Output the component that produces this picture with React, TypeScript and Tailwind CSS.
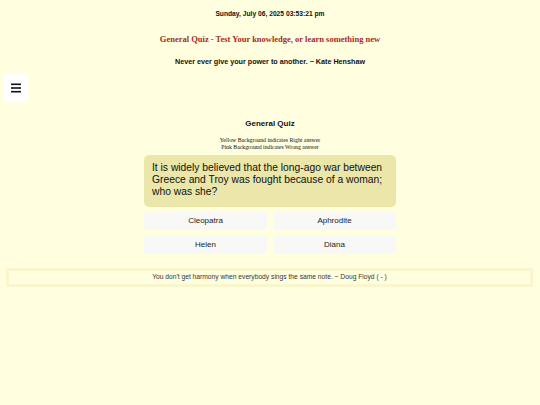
const answers = ['Cleopatra', 'Aphrodite', 'Helen', 'Diana'];

const App = () => {
  return (
    <div className="min-h-[405px] bg-[#ffffe0] font-['Liberation_Sans',Arial,sans-serif] text-[#111]">
      {/* header */}
      <div className="flex flex-col items-center pt-[10px]">
        <div className="text-[6.7px] leading-[8px] font-bold">Sunday, July 06, 2025 03:53:21 pm</div>
        <div className="mt-[16px] text-[8.5px] leading-[10px] font-bold text-[#a52a2a] font-['Liberation_Serif','Times_New_Roman',serif]">
          General Quiz - Test Your knowledge, or learn something new
        </div>
        <div className="mt-[14px] text-[7.2px] leading-[8px] font-bold">Never ever give your power to another. ~ Kate Henshaw</div>
      </div>

      {/* menu button */}
      <div className="mt-[8px] ml-[4px] w-[24px] h-[28px] bg-white flex items-center justify-center">
        <svg width="10" height="10" viewBox="0 0 10 10">
          <rect x="0" y="0.5" width="10" height="1.6" fill="#111" />
          <rect x="0" y="4.2" width="10" height="1.6" fill="#111" />
          <rect x="0" y="7.9" width="10" height="1.6" fill="#111" />
        </svg>
      </div>

      {/* quiz */}
      <div className="mt-[17px] mx-auto w-[252px] flex flex-col items-center">
        <div className="text-[8px] leading-[10px] font-bold">General Quiz</div>
        <div className="mt-[8px] text-[5.8px] leading-[7px] text-center font-['Liberation_Serif','Times_New_Roman',serif]">
          <div>Yellow Background indicates Right answer</div>
          <div>Pink Background indicates Wrong answer</div>
        </div>
        <div className="mt-[4px] w-full h-[52px] bg-[#ebe6a9] rounded-[5px] px-[8px] pt-[7px] text-[10.3px] leading-[12px] text-[#111]">
          It is widely believed that the long-ago war between Greece and Troy was fought because of a woman; who was she?
        </div>
        <div className="mt-[4px] w-full grid grid-cols-2 gap-x-[6px] gap-y-[5px]">
          {answers.map(a => (
            <div key={a} className="h-[19px] bg-[#f8f8f6] rounded-[4px] flex items-center justify-center text-[8px] text-[#222]">
              {a}
            </div>
          ))}
        </div>
      </div>

      {/* footer quote */}
      <div className="mt-[14px] ml-[6px] mr-[7px] h-[19px] border-[3px] border-[#f8f6cc] flex items-center justify-center text-[6.7px] text-[#333]">
        You don't get harmony when everybody sings the same note. ~ Doug Floyd ( - )
      </div>
    </div>
  );
};

export default App;
